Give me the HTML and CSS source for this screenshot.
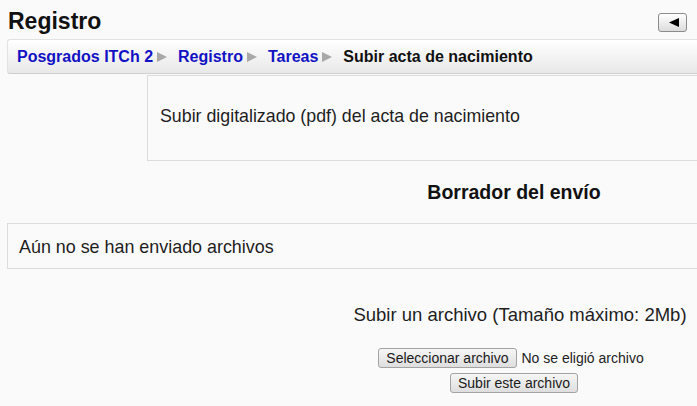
FILE: index.html
```html
<!DOCTYPE html>
<html lang="es">
<head>
<meta charset="utf-8">
<title>Registro</title>
<link rel="stylesheet" href="styles.css">
</head>
<body>
<header class="page-header">
  <h1 class="page-title">Registro</h1>
  <button class="dock-toggle" type="button" aria-label="Ocultar bloques">
    <svg width="10" height="9" viewBox="0 0 10 9"><polygon points="0,4.5 10,0 10,9" fill="#000"/></svg>
  </button>
</header>
<div class="main">
  <nav class="breadcrumb">
    <a href="#">Posgrados ITCh 2</a><span class="sep"><svg width="10" height="10" viewBox="0 0 10 10"><polygon points="0,0 10,5 0,10" fill="#a8a8a8"/></svg></span><a href="#">Registro</a><span class="sep"><svg width="10" height="10" viewBox="0 0 10 10"><polygon points="0,0 10,5 0,10" fill="#a8a8a8"/></svg></span><a href="#">Tareas</a><span class="sep"><svg width="10" height="10" viewBox="0 0 10 10"><polygon points="0,0 10,5 0,10" fill="#a8a8a8"/></svg></span><span class="current">Subir acta de nacimiento</span>
  </nav>
  <div class="intro-box">Subir digitalizado (pdf) del acta de nacimiento</div>
  <h2 class="section-title">Borrador del envío</h2>
  <div class="files-box">Aún no se han enviado archivos</div>
  <div class="upload">
    <p class="upload-title">Subir un archivo (Tamaño máximo: 2Mb)</p>
    <div class="file-row">
      <button class="btn" type="button">Seleccionar archivo</button>
      <span class="file-label">No se eligió archivo</span>
    </div>
    <div class="submit-row">
      <button class="btn" type="button">Subir este archivo</button>
    </div>
  </div>
</div>
</body>
</html>
```

FILE: styles.css
```css
html, body {
  margin: 0;
  padding: 0;
}
body {
  background: #fafafa;
  color: #1e1e1e;
  font-family: "Liberation Sans", Arial, sans-serif;
  overflow: hidden;
  width: 697px;
  height: 406px;
}
.page-header {
  display: flex;
  justify-content: space-between;
  align-items: flex-start;
  padding: 8px 10px 0 8px;
  height: 31px;
}
.page-title {
  margin: 0;
  font-size: 23px;
  line-height: 26px;
  font-weight: bold;
  color: #111;
}
.dock-toggle {
  margin-top: 5px;
  width: 29px;
  height: 19px;
  padding: 0 0 0 2px;
  border: 1px solid #8c8c8c;
  border-radius: 3px;
  background: linear-gradient(#ffffff, #dcdcdc);
  display: flex;
  align-items: center;
  justify-content: center;
}
.dock-toggle svg { display: block; }
.main {
  width: 1028px;
}
.breadcrumb {
  margin-left: 7px;
  height: 33px;
  border-top: 1px solid #e2e2e2;
  border-bottom: 1px solid #cfcfcf;
  border-left: 1px solid #e2e2e2;
  border-radius: 3px 0 0 3px;
  background: linear-gradient(#ffffff, #e8e8e8);
  padding-left: 9px;
  display: flex;
  align-items: center;
  font-size: 16px;
  font-weight: bold;
}
.breadcrumb a {
  color: #1212c4;
  text-decoration: none;
}
.breadcrumb .current {
  color: #111;
}
.sep {
  display: inline-flex;
  margin: 0 11px 0 4px;
}
.sep svg { display: block; }
.intro-box {
  margin: 1px 0 0 147px;
  border: 1px solid #dcdcdc;
  padding: 31px 12px 35px;
  font-size: 17.8px;
  line-height: 18px;
}
.section-title {
  margin: 20px 0 0;
  text-align: center;
  font-size: 19.5px;
  line-height: 22px;
  font-weight: bold;
  color: #111;
}
.files-box {
  margin: 20px 0 0 7px;
  border: 1px solid #dcdcdc;
  padding: 14px 11px 12px;
  font-size: 17.9px;
  line-height: 18px;
}
.upload {
  text-align: center;
  padding-top: 35px;
}
.upload-title {
  margin: 0;
  font-size: 18.5px;
  line-height: 22px;
  padding-left: 12px;
}
.file-row {
  margin-top: 22px;
  display: flex;
  justify-content: center;
  align-items: center;
  gap: 5px;
  padding-right: 6px;
}
.file-label {
  font-size: 14px;
  color: #222;
}
.submit-row {
  margin-top: 5px;
  display: flex;
  justify-content: center;
}
.btn {
  font-family: "Liberation Sans", Arial, sans-serif;
  font-size: 14px;
  color: #1a1a1a;
  height: 20px;
  padding: 0 7px;
  border: 1px solid #a3a3a3;
  border-radius: 3px;
  background: linear-gradient(#f6f6f6, #dedede);
  line-height: 18px;
}
```
